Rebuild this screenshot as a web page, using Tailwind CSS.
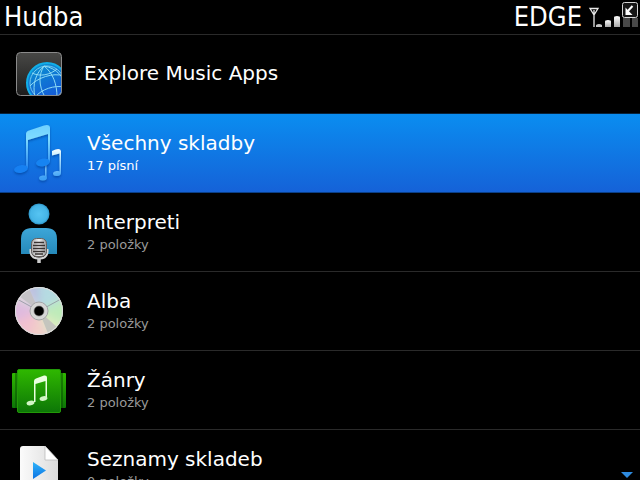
<!DOCTYPE html>
<html lang="cs">
<head>
    <meta charset="UTF-8">
    <meta name="viewport" content="width=device-width, initial-scale=1.0">
    <title>Hudba</title>
    <script src="https://cdn.jsdelivr.net/npm/@tailwindcss/browser@4"></script>
</head>
<body class="bg-black text-white font-['DejaVu_Sans',sans-serif]">
    <div class="relative flex flex-col h-screen overflow-hidden">
        <!-- Status bar -->
        <header class="flex shrink-0 justify-between items-center h-[35px] pl-1 border-b border-[#2a2a2a] font-['DejaVu_Sans_Condensed','DejaVu_Sans',sans-serif] font-stretch-condensed text-[27px] leading-8">
            <h1>Hudba</h1>
            <div class="flex items-center gap-1">
                <span>EDGE</span>
                <svg class="w-[54px] h-[34px]" viewBox="0 0 54 34" role="img" aria-label="Signál">
                    <defs>
                        <linearGradient id="bar" x1="0" y1="0" x2="0" y2="1">
                            <stop offset="0" stop-color="#fff"/>
                            <stop offset="1" stop-color="#a8a8a8"/>
                        </linearGradient>
                    </defs>
                    <path d="M4 8.500H12L8 15ZM8 10V27" fill="none" stroke="#e8e8e8" stroke-width="1.3"/>
                    <path d="M10 27V25Q13 23 16 25V27Z" fill="#c4c4c4"/>
                    <path d="M19 27V21.500Q19 20 22 20T25 21.500V27Z" fill="url(#bar)"/>
                    <path d="M28 27V17.500Q28 16 31 16T34 17.500V27Z" fill="url(#bar)"/>
                    <path d="M37 18H44V27H37ZM46 18H52V27H46Z" fill="#484848"/>
                    <rect x="36.500" y="2.500" width="15" height="15" rx="2" fill="#161616" stroke="#d5d5d5"/>
                    <path d="M46.500 6L41 12" stroke="#fff" stroke-width="2"/>
                    <path d="M39.500 7.500V15H46.500Z" fill="#fff"/>
                </svg>
            </div>
        </header>

        <main>
            <ul>
                <li>
                    <a href="#explore" class="flex items-center gap-1.5 h-[79px] border-b border-[#08233c]">
                        <svg class="size-[78px] shrink-0" viewBox="0 0 78 78" aria-hidden="true">
                            <defs>
                                <linearGradient id="tile" x1="0" y1="0" x2="0" y2="1">
                                    <stop offset="0" stop-color="#484846"/>
                                    <stop offset="1" stop-color="#1c1c1c"/>
                                </linearGradient>
                                <linearGradient id="globe" x1="0" y1="0" x2=".5" y2="1">
                                    <stop offset="0" stop-color="#0a98cf"/>
                                    <stop offset="1" stop-color="#1456d8"/>
                                </linearGradient>
                                <clipPath id="tileClip"><rect x="16.500" y="17.500" width="45" height="43" rx="4"/></clipPath>
                            </defs>
                            <rect x="16.500" y="17.500" width="45" height="43" rx="4" fill="url(#tile)"/>
                            <g clip-path="url(#tileClip)" fill="none" stroke="#8edbf5">
                                <circle cx="47" cy="48" r="20" fill="url(#globe)" stroke="#12aee8" stroke-width="2"/>
                                <circle cx="47" cy="48" r="17" stroke-width=".8"/>
                                <path d="M44 31C36 38 32 49 35 62M44 31C39 39 38 50 45 62M44 31C53 38 57 49 57 62M44 31C57 33 65 43 66 54"/>
                                <path d="M32 38C40 42 50 40 57 34M30 51C37 43 53 37 64 41M35 62C42 54 54 50 65 52"/>
                            </g>
                            <rect x="16.500" y="17.500" width="45" height="43" rx="4" fill="none" stroke="#8a8a8a"/>
                        </svg>
                        <span class="pb-0.5 text-[20px] leading-6">Explore Music Apps</span>
                    </a>
                </li>
                <li>
                    <a href="#songs" aria-current="true" class="flex items-center gap-[9px] h-[79px] border-b border-[#0b3f86] bg-linear-to-b from-[#0a8df0] to-[#1562d8]">
                        <svg class="size-[78px] shrink-0" viewBox="0 0 78 78" aria-hidden="true">
                            <defs>
                                <linearGradient id="note" gradientUnits="userSpaceOnUse" x1="0" y1="10" x2="0" y2="60">
                                    <stop offset="0" stop-color="#6ccfff"/>
                                    <stop offset=".3" stop-color="#7fdcff"/>
                                    <stop offset="1" stop-color="#1676ee"/>
                                </linearGradient>
                                <linearGradient id="noteSmall" gradientUnits="userSpaceOnUse" x1="0" y1="34" x2="0" y2="64">
                                    <stop offset="0" stop-color="#fff"/>
                                    <stop offset=".25" stop-color="#c8efff"/>
                                    <stop offset="1" stop-color="#3ca0f6"/>
                                </linearGradient>
                                <filter id="noteShadow" x="-20%" y="-20%" width="140%" height="140%">
                                    <feDropShadow dx="0" dy="1.500" stdDeviation="1.200" flood-color="#063f98" flood-opacity=".7"/>
                                </filter>
                            </defs>
                            <g filter="url(#noteShadow)" fill="url(#noteSmall)">
                                <path d="M45 45H46.500V63H45ZM52 37Q60 33 61 37V59H59.500V39.500L52 41.500Z"/>
                                <ellipse cx="43" cy="64" rx="4" ry="2.500" transform="rotate(-8 43 64)"/>
                                <ellipse cx="57" cy="59.500" rx="4" ry="2.500" transform="rotate(-8 57 59.500)"/>
                            </g>
                            <g filter="url(#noteShadow)">
                                <path d="M26 20Q26 17.500 29 16.500L44 11.500Q50 10 50 14V48H48V20L28 26V54H26Z" fill="url(#note)"/>
                                <ellipse cx="21" cy="55" rx="7" ry="3.800" transform="rotate(-10 21 55)" fill="#1680f2"/>
                                <ellipse cx="43" cy="48.500" rx="7" ry="3.800" transform="rotate(-10 43 48.500)" fill="#1984f2"/>
                            </g>
                        </svg>
                        <span class="flex flex-col">
                            <span class="text-[20px] leading-[26px]">Všechny skladby</span>
                            <span class="text-[13px] leading-5">17 písní</span>
                        </span>
                    </a>
                </li>
                <li>
                    <a href="#artists" class="flex items-center gap-[9px] h-[79px] border-b border-[#2a2a2a]">
                        <svg class="size-[78px] shrink-0" viewBox="0 0 78 78" aria-hidden="true">
                            <defs>
                                <radialGradient id="head">
                                    <stop offset="0" stop-color="#56c4f2"/>
                                    <stop offset=".8" stop-color="#45b4e6"/>
                                    <stop offset="1" stop-color="#2c93c6"/>
                                </radialGradient>
                                <linearGradient id="torso" x1="0" y1="0" x2="0" y2="1">
                                    <stop offset="0" stop-color="#3da6d8"/>
                                    <stop offset="1" stop-color="#2589ba"/>
                                </linearGradient>
                                <linearGradient id="mic" x1="0" y1="0" x2="1" y2="0">
                                    <stop offset="0" stop-color="#aaa"/>
                                    <stop offset=".5" stop-color="#f2f2f2"/>
                                    <stop offset="1" stop-color="#999"/>
                                </linearGradient>
                            </defs>
                            <circle cx="39" cy="21" r="10.500" fill="url(#head)"/>
                            <path d="M21 61V46Q21 35 32 35H46Q57 35 57 46V61Z" fill="url(#torso)"/>
                            <path d="M30.500 56V59Q31 65.500 39 65.500T47.500 59V56" fill="none" stroke="#d8d8d8" stroke-width="2"/>
                            <path d="M39 65V70" stroke="#ccc" stroke-width="3.500"/>
                            <rect x="31.500" y="45.500" width="15" height="18" rx="5" fill="url(#mic)" stroke="#665f5c"/>
                            <path d="M34 49.500H44M33 52.500H45M33 55.500H45M33 58.500H45M35 61H43" stroke="#393331" stroke-width="1.400"/>
                        </svg>
                        <span class="flex flex-col">
                            <span class="text-[20px] leading-[26px]">Interpreti</span>
                            <span class="text-[13px] leading-5 text-[#999]">2 položky</span>
                        </span>
                    </a>
                </li>
                <li>
                    <a href="#albums" class="flex items-center gap-[9px] h-[79px] border-b border-[#2a2a2a]">
                        <svg class="size-[78px] shrink-0" viewBox="0 0 78 78" aria-hidden="true">
                            <defs>
                                <clipPath id="disc"><circle cx="39" cy="39" r="24"/></clipPath>
                                <filter id="soft" x="-30%" y="-30%" width="160%" height="160%"><feGaussianBlur stdDeviation="4"/></filter>
                            </defs>
                            <circle cx="39" cy="39" r="24" fill="#dcd8dc"/>
                            <g clip-path="url(#disc)">
                                <g filter="url(#soft)">
                                    <path d="M39 39L22 10H39Z" fill="#b9bde0"/>
                                    <path d="M39 39L39 8H68V24Z" fill="#b5dbe2"/>
                                    <path d="M39 39L70 24V60Z" fill="#bdebb9"/>
                                    <path d="M39 39L68 54L56 72Z" fill="#dcecc0"/>
                                    <path d="M39 39L50 70H22Z" fill="#f1cfc8"/>
                                    <path d="M39 39L28 70L8 52Z" fill="#f2c1cf"/>
                                    <path d="M39 39L6 54V24Z" fill="#dfbadf"/>
                                </g>
                                <path d="M39 39L19 24L28 14Z" fill="#c4c2c6"/>
                                <path d="M39 39L49 64L58 56Z" fill="#c4c5be"/>
                                <path d="M39 39L17 27M39 39L61 27" stroke="#8f96a0" stroke-width=".8"/>
                            </g>
                            <circle cx="39" cy="39" r="23.500" fill="none" stroke="#dedede"/>
                            <circle cx="39" cy="39" r="9" fill="#d6d6d6" stroke="#a5a5a8"/>
                            <circle cx="39" cy="39" r="5" fill="#000" stroke="#777" stroke-width=".6"/>
                        </svg>
                        <span class="flex flex-col">
                            <span class="text-[20px] leading-[26px]">Alba</span>
                            <span class="text-[13px] leading-5 text-[#999]">2 položky</span>
                        </span>
                    </a>
                </li>
                <li>
                    <a href="#genres" class="flex items-center gap-[9px] h-[79px] border-b border-[#2a2a2a]">
                        <svg class="size-[78px] shrink-0" viewBox="0 0 78 78" aria-hidden="true">
                            <defs>
                                <linearGradient id="green" x1="0" y1="0" x2="0" y2="1">
                                    <stop offset="0" stop-color="#2fb800"/>
                                    <stop offset="1" stop-color="#0d7607"/>
                                </linearGradient>
                            </defs>
                            <rect x="12" y="22" width="54" height="35" rx="1" fill="url(#green)"/>
                            <path d="M16 22V57M62 22V57" stroke="#074a03"/>
                            <rect x="17.500" y="18.500" width="43" height="43" rx="1.500" fill="url(#green)" stroke="#229a08"/>
                            <path d="M34 30Q34 28 36 27.500L44 24.500Q47 24 47 26.500V47H45.500V30L35.500 33V51H34Z" fill="#eaffdf"/>
                            <ellipse cx="30.500" cy="52" rx="4" ry="2.200" transform="rotate(-12 30.500 52)" fill="#d2f5c5"/>
                            <ellipse cx="43.500" cy="47.500" rx="4" ry="2.200" transform="rotate(-12 43.500 47.500)" fill="#d2f5c5"/>
                        </svg>
                        <span class="flex flex-col">
                            <span class="text-[20px] leading-[26px]">Žánry</span>
                            <span class="text-[13px] leading-5 text-[#999]">2 položky</span>
                        </span>
                    </a>
                </li>
                <li>
                    <a href="#playlists" class="flex items-center gap-[9px] h-[79px] border-b border-[#2a2a2a]">
                        <svg class="size-[78px] shrink-0" viewBox="0 0 78 78" aria-hidden="true">
                            <defs>
                                <linearGradient id="paper" x1="0" y1="0" x2="1" y2="0">
                                    <stop offset="0" stop-color="#fbfbfb"/>
                                    <stop offset="1" stop-color="#dcdcdc"/>
                                </linearGradient>
                                <linearGradient id="play" x1="0" y1="0" x2="0" y2="1">
                                    <stop offset="0" stop-color="#2fb4fa"/>
                                    <stop offset="1" stop-color="#0c72e2"/>
                                </linearGradient>
                            </defs>
                            <path d="M20 19Q20 16 23 16H45L58 30V62Q58 64 55 64H23Q20 64 20 61Z" fill="url(#paper)"/>
                            <path d="M45 16V30H58Z" fill="#fff" stroke="#bbb" stroke-width=".8"/>
                            <path d="M33 32L46 40.500L33 49Z" fill="url(#play)"/>
                        </svg>
                        <span class="flex flex-col">
                            <span class="text-[20px] leading-[26px]">Seznamy skladeb</span>
                            <span class="text-[13px] leading-5 text-[#999]">0 položky</span>
                        </span>
                    </a>
                </li>
            </ul>
        </main>

        <!-- More items below -->
        <svg class="absolute right-[7px] bottom-0.5 w-3 h-1.5" viewBox="0 0 12 6" aria-hidden="true">
            <path d="M0 0H12L6 6Z" fill="#2e8be0"/>
        </svg>
    </div>
</body>
</html>
